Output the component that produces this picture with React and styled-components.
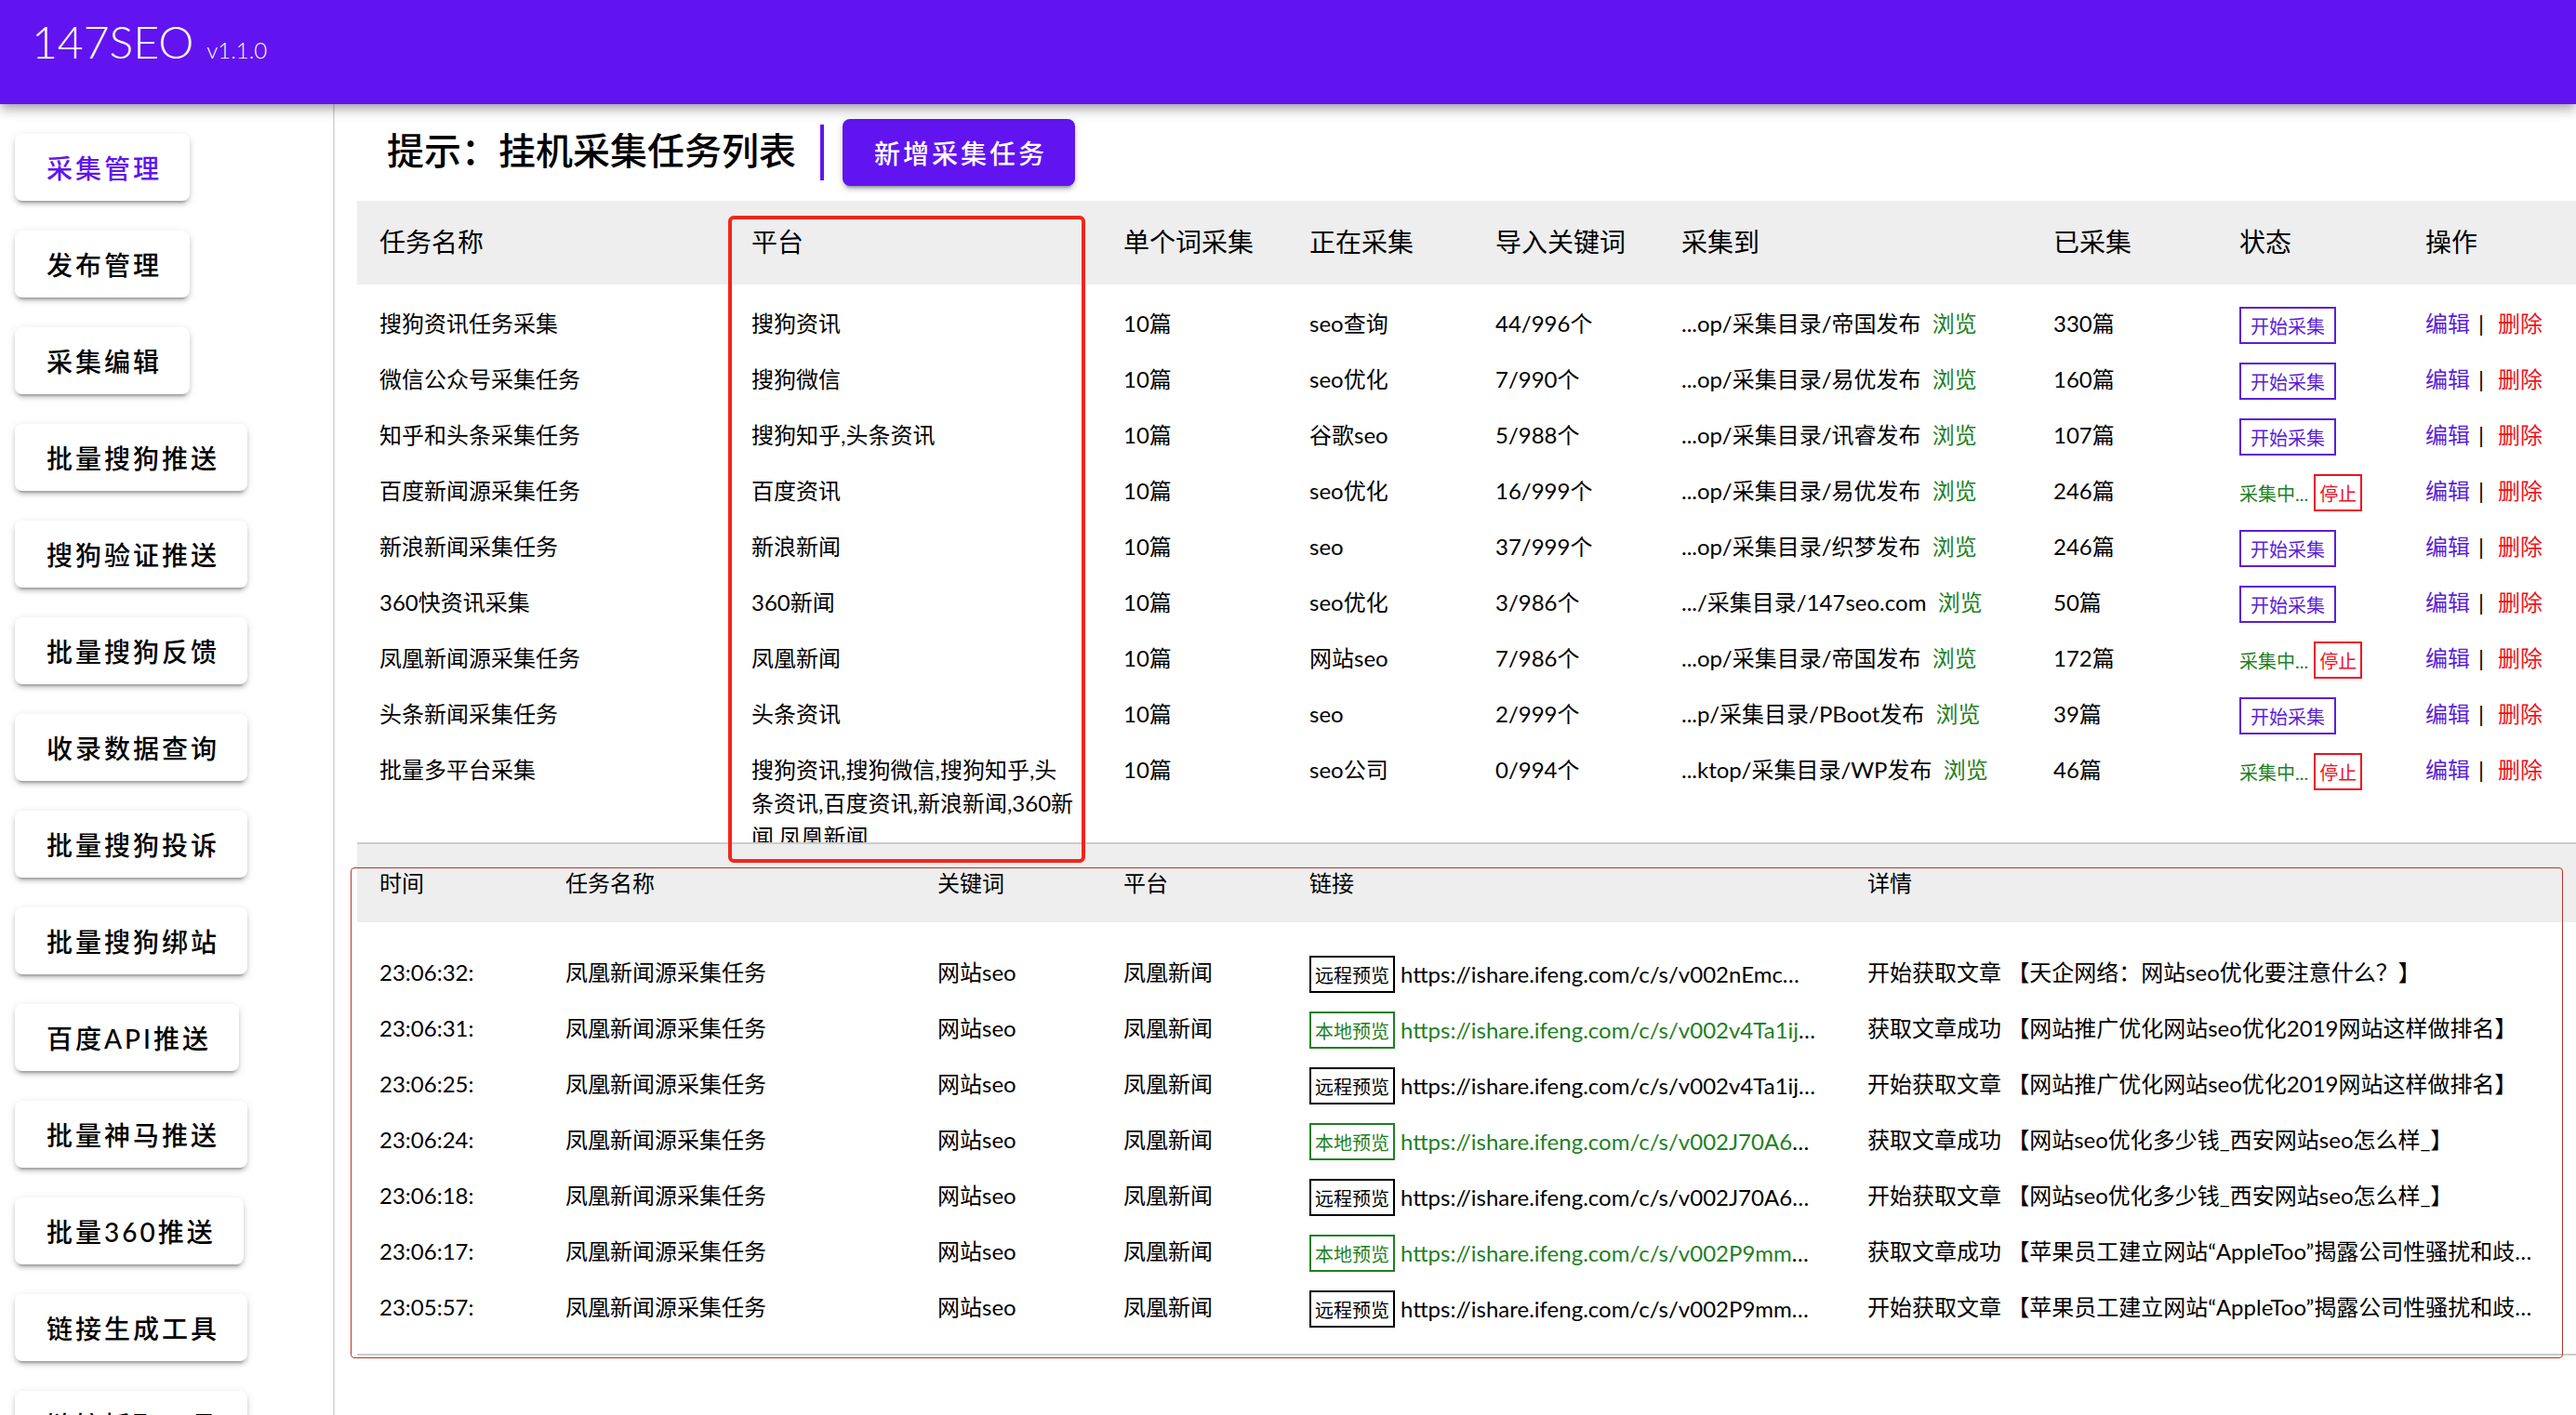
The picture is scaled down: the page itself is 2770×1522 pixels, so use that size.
import { useState } from 'react';
import styled, { createGlobalStyle } from 'styled-components';

const GlobalStyle = createGlobalStyle`
	* {
		box-sizing: border-box;
	}

	body {
		margin: 0;
		background: #fff;
		color: #000;
		font-family: Lato, 'Noto Sans CJK SC', sans-serif;
		font-size: 24px;
		line-height: 36px;
	}

	button {
		font-family: inherit;
		cursor: pointer;
	}
`;

const PRIMARY = '#6114f0';
const GREEN = '#1f8023';
const VIOLET = '#5b1fd8';
const RED = '#f01020';

const MENU = [
	'采集管理',
	'发布管理',
	'采集编辑',
	'批量搜狗推送',
	'搜狗验证推送',
	'批量搜狗反馈',
	'收录数据查询',
	'批量搜狗投诉',
	'批量搜狗绑站',
	'百度API推送',
	'批量神马推送',
	'批量360推送',
	'链接生成工具',
	'链接抓取工具',
];

const TASK_COLUMNS = ['任务名称', '平台', '单个词采集', '正在采集', '导入关键词', '采集到', '已采集', '状态', '操作'];

const TASKS = [
	{ name: '搜狗资讯任务采集', platform: '搜狗资讯', keyword: 'seo查询', imported: '44/996个', path: '...op/采集目录/帝国发布', done: '330篇' },
	{ name: '微信公众号采集任务', platform: '搜狗微信', keyword: 'seo优化', imported: '7/990个', path: '...op/采集目录/易优发布', done: '160篇' },
	{ name: '知乎和头条采集任务', platform: '搜狗知乎,头条资讯', keyword: '谷歌seo', imported: '5/988个', path: '...op/采集目录/讯睿发布', done: '107篇' },
	{ name: '百度新闻源采集任务', platform: '百度资讯', keyword: 'seo优化', imported: '16/999个', path: '...op/采集目录/易优发布', done: '246篇', running: true },
	{ name: '新浪新闻采集任务', platform: '新浪新闻', keyword: 'seo', imported: '37/999个', path: '...op/采集目录/织梦发布', done: '246篇' },
	{ name: '360快资讯采集', platform: '360新闻', keyword: 'seo优化', imported: '3/986个', path: '.../采集目录/147seo.com', done: '50篇' },
	{ name: '凤凰新闻源采集任务', platform: '凤凰新闻', keyword: '网站seo', imported: '7/986个', path: '...op/采集目录/帝国发布', done: '172篇', running: true },
	{ name: '头条新闻采集任务', platform: '头条资讯', keyword: 'seo', imported: '2/999个', path: '...p/采集目录/PBoot发布', done: '39篇' },
	{
		name: '批量多平台采集',
		platform: '搜狗资讯,搜狗微信,搜狗知乎,头条资讯,百度资讯,新浪新闻,360新闻,凤凰新闻',
		keyword: 'seo公司',
		imported: '0/994个',
		path: '...ktop/采集目录/WP发布',
		done: '46篇',
		running: true,
	},
];

const LOG_COLUMNS = ['时间', '任务名称', '关键词', '平台', '链接', '详情'];

const LOGS = [
	{ time: '23:06:32:', url: 'https://ishare.ifeng.com/c/s/v002nEmc', detail: '开始获取文章 【天企网络：网站seo优化要注意什么？】' },
	{ time: '23:06:31:', url: 'https://ishare.ifeng.com/c/s/v002v4Ta1ij', detail: '获取文章成功 【网站推广优化网站seo优化2019网站这样做排名】', local: true },
	{ time: '23:06:25:', url: 'https://ishare.ifeng.com/c/s/v002v4Ta1ij', detail: '开始获取文章 【网站推广优化网站seo优化2019网站这样做排名】' },
	{ time: '23:06:24:', url: 'https://ishare.ifeng.com/c/s/v002J70A6', detail: '获取文章成功 【网站seo优化多少钱_西安网站seo怎么样_】', local: true },
	{ time: '23:06:18:', url: 'https://ishare.ifeng.com/c/s/v002J70A6', detail: '开始获取文章 【网站seo优化多少钱_西安网站seo怎么样_】' },
	{ time: '23:06:17:', url: 'https://ishare.ifeng.com/c/s/v002P9mm', detail: '获取文章成功 【苹果员工建立网站“AppleToo”揭露公司性骚扰和歧…', local: true },
	{ time: '23:05:57:', url: 'https://ishare.ifeng.com/c/s/v002P9mm', detail: '开始获取文章 【苹果员工建立网站“AppleToo”揭露公司性骚扰和歧…' },
];

const Page = styled.div`
	display: flex;
	flex-direction: column;
	height: 100vh;
	overflow: hidden;
`;

const TopBar = styled.header`
	display: flex;
	flex: none;
	align-items: baseline;
	gap: 14px;
	padding: 15px 34px 37px;
	background: ${PRIMARY};
	color: #fff;
	font-weight: 300;
	z-index: 1;
	box-shadow:
		0 4px 8px -2px rgba(0, 0, 0, 0.2),
		0 8px 10px rgba(0, 0, 0, 0.14),
		0 2px 20px rgba(0, 0, 0, 0.12);
`;

const Brand = styled.span`
	font-size: 48px;
	line-height: 60px;
`;

const Body = styled.div`
	display: flex;
	flex: 1;
	min-height: 0;
`;

const Sidebar = styled.nav`
	display: flex;
	flex: none;
	flex-direction: column;
	align-items: flex-start;
	gap: 32px;
	width: 360px;
	padding: 32px 16px;
	border-right: 2px solid #ddd;
`;

const RaisedButton = styled.button`
	flex: none;
	height: 72px;
	padding: 0 30px 0 34px;
	border: 0;
	border-radius: 8px;
	background: ${({ $filled }) => ($filled ? PRIMARY : '#fff')};
	color: ${({ $filled, $active }) => ($filled ? '#fff' : $active ? PRIMARY : '#000')};
	font-size: 28px;
	font-weight: 500;
	letter-spacing: 3px;
	white-space: nowrap;
	box-shadow:
		0 6px 2px -4px rgba(0, 0, 0, 0.2),
		0 4px 4px rgba(0, 0, 0, 0.14),
		0 2px 10px rgba(0, 0, 0, 0.12);
`;

const Main = styled.main`
	flex: 1;
	min-width: 0;
	padding-left: 24px;
	overflow: hidden;
`;

const TitleRow = styled.div`
	display: flex;
	align-items: center;
	gap: 20px;
	padding: 16px 32px;
`;

const Title = styled.h1`
	margin: 0;
	padding: 0 6px 4px 0;
	font-size: 40px;
	font-weight: 500;
	line-height: 60px;
`;

const Divider = styled.span`
	width: 4px;
	height: 60px;
	background: ${PRIMARY};
`;

/* the twelve column grid runs slightly past the right edge */
const Panel = styled.section`
	position: relative;
	margin-right: -14px;
	border-bottom: 2px solid #ccc;
`;

const TaskScroll = styled.div`
	height: 690px;
	overflow: hidden;
`;

const Table = styled.table`
	display: block;
`;

const Head = styled.thead`
	display: block;
	background: #eee;
`;

const TaskBody = styled.tbody`
	display: block;
	padding-top: 14px;
`;

const LogBody = styled.tbody`
	display: block;
	padding: 26px 0 18px;
`;

const TaskRow = styled.tr`
	display: grid;
	grid-template-columns: 2fr 2fr 1fr 1fr 1fr 2fr 1fr 1fr 1fr;
	align-items: start;
`;

const LogRow = styled.tr`
	display: grid;
	grid-template-columns: 1fr 2fr 1fr 1fr 3fr 4fr;
	align-items: start;
`;

const HeadCell = styled.th`
	padding: ${({ $compact }) => ($compact ? '24px' : '26px 24px 28px')};
	font-size: ${({ $compact }) => ($compact ? '24px' : '28px')};
	font-weight: 400;
	text-align: left;
	white-space: nowrap;
`;

const Cell = styled.td`
	min-width: 0;
	padding: 10px 24px 14px;
`;

const FlexCell = styled(Cell)`
	display: flex;
	align-items: baseline;
	gap: 6px;
	height: 60px;
	padding: 10px 0 0 24px;
	white-space: nowrap;
`;

const LineCell = styled(Cell)`
	overflow: hidden;
	text-overflow: ellipsis;
	white-space: nowrap;
`;

const OutlineButton = styled.button`
	flex: none;
	height: 40px;
	padding: 0 ${({ $wide }) => ($wide ? 10 : 4)}px;
	border: 2px solid ${({ $color }) => $color};
	background: #fff;
	color: ${({ $color }) => $color};
	font-size: 20px;
`;

const Running = styled.span`
	color: ${GREEN};
	font-size: 20px;
`;

const TextLink = styled.a`
	color: ${({ $color }) => $color};
	text-decoration: none;
`;

const Separator = styled.span`
	margin: 0 15px 0 9px;
`;

const PlatformFrame = styled.div`
	position: absolute;
	top: 16px;
	left: calc(100% / 6 - 1px);
	width: calc(100% / 6 - 16px);
	height: 696px;
	border: 4px solid #f3251a;
	border-radius: 6px;
	pointer-events: none;
	z-index: 1;
`;

const LogFrame = styled.div`
	position: absolute;
	top: 25px;
	right: 28px;
	bottom: -5px;
	left: -7px;
	border: 1px solid #c03028;
	border-radius: 4px;
	pointer-events: none;
`;

const App = () => {
	const [active, setActive] = useState(MENU[0]);

	return (
		<Page>
			<GlobalStyle />
			<TopBar>
				<Brand>147SEO</Brand>
				<span>v1.1.0</span>
			</TopBar>
			<Body>
				<Sidebar>
					{MENU.map((item) => (
						<RaisedButton key={item} $active={item === active} onClick={() => setActive(item)}>
							{item}
						</RaisedButton>
					))}
				</Sidebar>
				<Main>
					<TitleRow>
						<Title>提示：挂机采集任务列表</Title>
						<Divider />
						<RaisedButton $filled>新增采集任务</RaisedButton>
					</TitleRow>
					<Panel>
						<TaskScroll>
							<Table>
								<Head>
									<TaskRow>
										{TASK_COLUMNS.map((title) => (
											<HeadCell key={title}>{title}</HeadCell>
										))}
									</TaskRow>
								</Head>
								<TaskBody>
									{TASKS.map(({ name, platform, keyword, imported, path, done, running }) => (
										<TaskRow key={name}>
											<Cell>{name}</Cell>
											<Cell>{platform}</Cell>
											<Cell>10篇</Cell>
											<Cell>{keyword}</Cell>
											<Cell>{imported}</Cell>
											<LineCell>
												{path}&nbsp; <TextLink href="#" $color={GREEN}>浏览</TextLink>
											</LineCell>
											<Cell>{done}</Cell>
											<FlexCell>
												{running ? (
													<>
														<Running>采集中...</Running>
														<OutlineButton $color={RED}>停止</OutlineButton>
													</>
												) : (
													<OutlineButton $wide $color={VIOLET}>开始采集</OutlineButton>
												)}
											</FlexCell>
											<LineCell>
												<TextLink href="#" $color={VIOLET}>编辑</TextLink>
												<Separator>|</Separator>
												<TextLink href="#" $color={RED}>删除</TextLink>
											</LineCell>
										</TaskRow>
									))}
								</TaskBody>
							</Table>
						</TaskScroll>
						<PlatformFrame />
					</Panel>
					<Panel>
						<Table>
							<Head>
								<LogRow>
									{LOG_COLUMNS.map((title) => (
										<HeadCell key={title} $compact>{title}</HeadCell>
									))}
								</LogRow>
							</Head>
							<LogBody>
								{LOGS.map(({ time, url, detail, local }) => (
									<LogRow key={time}>
										<Cell>{time}</Cell>
										<Cell>凤凰新闻源采集任务</Cell>
										<Cell>网站seo</Cell>
										<Cell>凤凰新闻</Cell>
										<FlexCell>
											<OutlineButton $color={local ? GREEN : '#000'}>{local ? '本地预览' : '远程预览'}</OutlineButton>
											<span>
												<TextLink href="#" $color={local ? GREEN : '#000'}>{url}</TextLink>…
											</span>
										</FlexCell>
										<LineCell>{detail}</LineCell>
									</LogRow>
								))}
							</LogBody>
						</Table>
						<LogFrame />
					</Panel>
				</Main>
			</Body>
		</Page>
	);
};

export default App;
